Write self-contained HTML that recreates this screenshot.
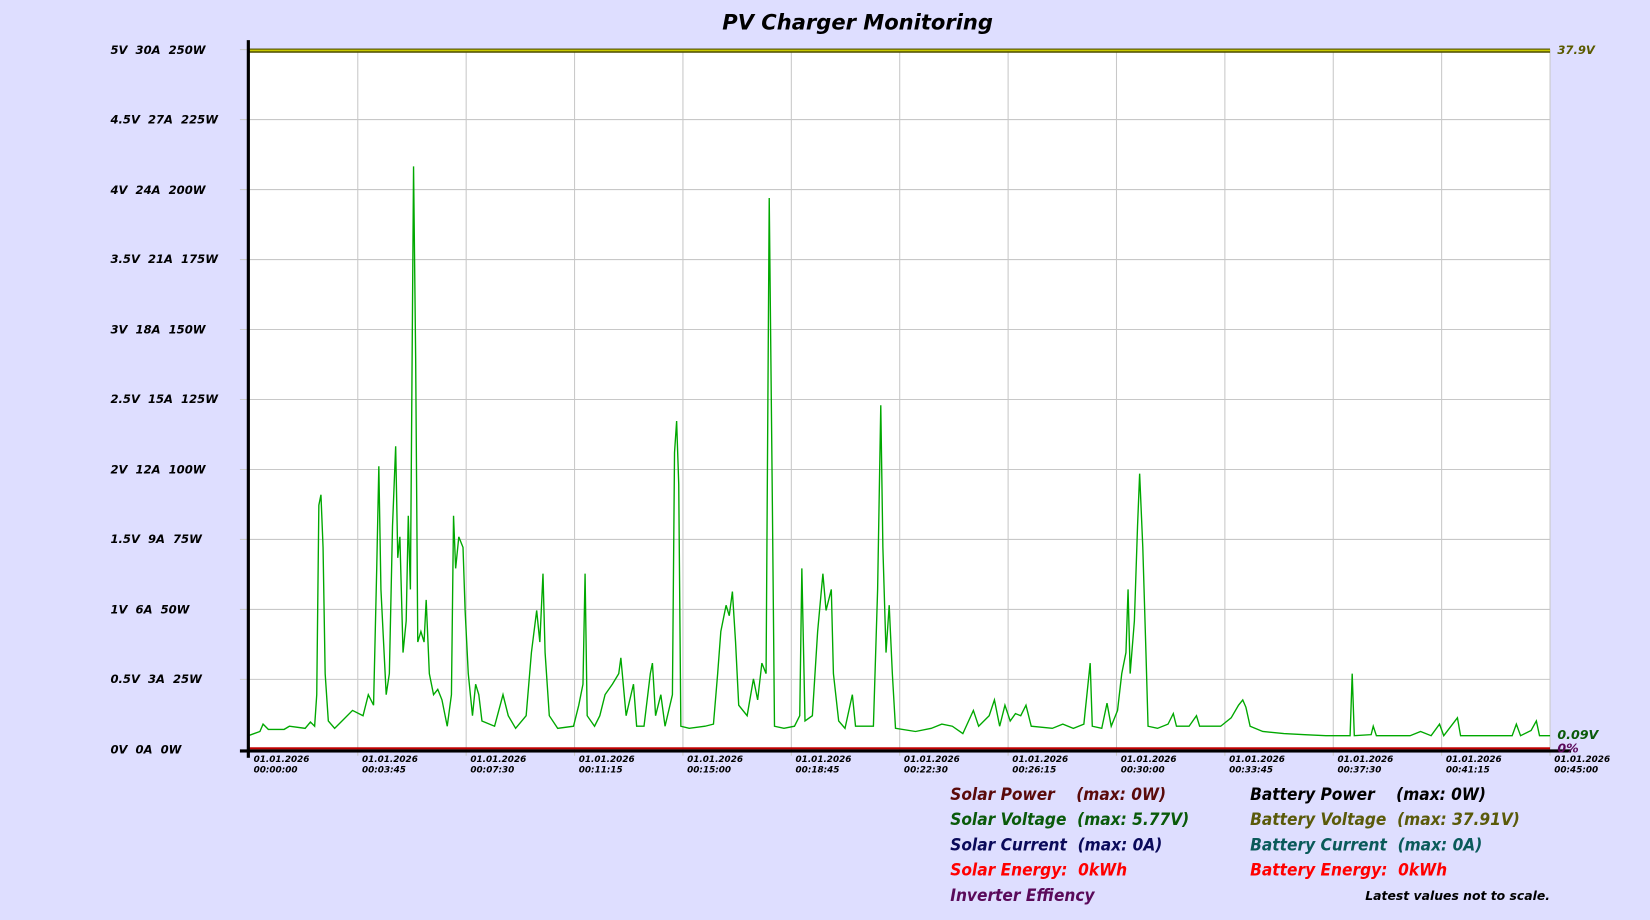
<!DOCTYPE html>
<html><head><meta charset="utf-8"><style>
html,body{margin:0;padding:0;background:#dedeff;width:1650px;height:920px;overflow:hidden}
svg{display:block}
text{font-family:"DejaVu Sans","Liberation Sans",sans-serif;font-style:italic;font-weight:bold;white-space:pre}
.lg text{font-family:"DejaVu Sans Condensed","DejaVu Sans",sans-serif;font-weight:bold}
</style></head><body>
<svg width="1650" height="920" viewBox="0 0 1568 874" xmlns="http://www.w3.org/2000/svg" xml:space="preserve">
<rect width="1568" height="874" fill="#dedeff"/>
<text x="815" y="28" font-size="20" text-anchor="middle" fill="#000">PV Charger Monitoring</text>
<rect x="236" y="47" width="1237" height="665" fill="#fff"/>
<g stroke="#c8c8c8" stroke-width="1">
<line x1="228" y1="113.5" x2="1473" y2="113.5"/><line x1="228" y1="180" x2="1473" y2="180"/>
<line x1="228" y1="246.5" x2="1473" y2="246.5"/><line x1="228" y1="313" x2="1473" y2="313"/>
<line x1="228" y1="379.5" x2="1473" y2="379.5"/><line x1="228" y1="446" x2="1473" y2="446"/>
<line x1="228" y1="512.5" x2="1473" y2="512.5"/><line x1="228" y1="579" x2="1473" y2="579"/>
<line x1="228" y1="645.5" x2="1473" y2="645.5"/><line x1="228" y1="47" x2="236" y2="47"/>
<line x1="340" y1="47" x2="340" y2="718"/><line x1="443" y1="47" x2="443" y2="718"/>
<line x1="546" y1="47" x2="546" y2="718"/><line x1="649" y1="47" x2="649" y2="718"/>
<line x1="752" y1="47" x2="752" y2="718"/><line x1="855" y1="47" x2="855" y2="718"/>
<line x1="958" y1="47" x2="958" y2="718"/><line x1="1061" y1="47" x2="1061" y2="718"/>
<line x1="1164" y1="47" x2="1164" y2="718"/><line x1="1267" y1="47" x2="1267" y2="718"/>
<line x1="1370" y1="47" x2="1370" y2="718"/><line x1="1473" y1="47" x2="1473" y2="718"/>
</g>
<rect x="236" y="46" width="1237" height="4" fill="#4a4a00"/>
<rect x="236" y="47" width="1237" height="1.6" fill="#c8c800"/>
<polyline fill="none" stroke="#00a800" stroke-width="1.3" points="236,699 247,695 250,688 255,693 270,693 275,690 290,692 295,686 299,690 301,660 303,480 305,470 307,520 309,640 312,685 318,692 325,685 335,675 345,680 350,660 355,670 358,540 360,443 362,560 365,620 367,660 370,640 373,500 376,424 378,530 380,510 383,620 386,590 388,490 390,560 393,158 395,340 397,610 400,600 403,610 405,570 408,640 412,660 416,655 420,665 425,690 429,660 431,490 433,540 436,510 440,520 442,580 445,640 449,680 452,650 455,660 458,685 470,690 478,660 483,680 490,692 500,680 505,620 510,580 513,610 516,545 518,620 522,680 530,692 545,690 550,670 554,650 556,545 558,680 565,690 570,680 575,660 582,650 588,640 590,625 595,680 602,650 605,690 612,690 618,640 620,630 623,680 628,660 632,690 639,660 641,430 643,400 645,460 647,690 655,692 670,690 678,688 682,640 685,600 690,575 693,585 696,562 699,610 702,670 710,680 716,645 720,665 724,630 728,640 731,188 734,480 736,690 745,692 755,690 760,680 762,540 765,685 772,680 777,600 782,545 785,580 790,560 792,640 797,685 803,692 810,660 813,690 830,690 834,560 837,385 839,520 842,620 845,575 848,640 851,692 870,695 885,692 895,688 905,690 915,697 925,675 930,690 940,680 945,665 950,690 955,670 960,685 965,678 970,680 975,670 980,690 1000,692 1010,688 1020,692 1030,688 1036,630 1038,690 1047,692 1052,668 1056,690 1062,675 1066,640 1070,620 1072,560 1074,640 1078,590 1081,500 1083,450 1086,520 1089,620 1091,690 1100,692 1110,688 1115,678 1118,690 1130,690 1137,680 1140,690 1160,690 1170,682 1177,670 1181,665 1184,672 1188,690 1200,695 1220,697 1240,698 1260,699 1283,699 1285,640 1287,699 1303,698 1305,690 1308,699 1340,699 1350,695 1360,699 1368,688 1372,699 1385,682 1388,699 1437,699 1441,688 1445,699 1455,694 1460,685 1463,699 1473,699"/>
<rect x="236" y="710" width="1237" height="2" fill="#c00000"/>
<rect x="228" y="712" width="1265" height="3" fill="#000"/>
<rect x="234.5" y="38" width="3" height="682" fill="#000"/>
<g font-size="11" fill="#000">
<text x="105" y="51">5V  30A  250W</text><text x="105" y="117">4.5V  27A  225W</text>
<text x="105" y="184">4V  24A  200W</text><text x="105" y="250">3.5V  21A  175W</text>
<text x="105" y="317">3V  18A  150W</text><text x="105" y="383">2.5V  15A  125W</text>
<text x="105" y="450">2V  12A  100W</text><text x="105" y="516">1.5V  9A  75W</text>
<text x="105" y="583">1V  6A  50W</text><text x="105" y="649">0.5V  3A  25W</text>
<text x="105" y="716">0V  0A  0W</text>
</g>
<g font-size="8.4" fill="#000">
<text x="241" y="724">01.01.2026</text><text x="241" y="734">00:00:00</text>
<text x="344" y="724">01.01.2026</text><text x="344" y="734">00:03:45</text>
<text x="447" y="724">01.01.2026</text><text x="447" y="734">00:07:30</text>
<text x="550" y="724">01.01.2026</text><text x="550" y="734">00:11:15</text>
<text x="653" y="724">01.01.2026</text><text x="653" y="734">00:15:00</text>
<text x="756" y="724">01.01.2026</text><text x="756" y="734">00:18:45</text>
<text x="859" y="724">01.01.2026</text><text x="859" y="734">00:22:30</text>
<text x="962" y="724">01.01.2026</text><text x="962" y="734">00:26:15</text>
<text x="1065" y="724">01.01.2026</text><text x="1065" y="734">00:30:00</text>
<text x="1168" y="724">01.01.2026</text><text x="1168" y="734">00:33:45</text>
<text x="1271" y="724">01.01.2026</text><text x="1271" y="734">00:37:30</text>
<text x="1374" y="724">01.01.2026</text><text x="1374" y="734">00:41:15</text>
<text x="1477" y="724">01.01.2026</text><text x="1477" y="734">00:45:00</text>
</g>
<text x="1480" y="51" font-size="11" fill="#5a5a00">37.9V</text>
<text x="1480" y="702" font-size="12" fill="#0a5a0a">0.09V</text>
<text x="1480" y="715" font-size="12" fill="#5a0a5a">0%</text>
<g class="lg" font-size="16.3">
<text x="903" y="760" fill="#5a0a0a">Solar Power    (max: 0W)</text>
<text x="903" y="784" fill="#0a5a0a">Solar Voltage  (max: 5.77V)</text>
<text x="903" y="808" fill="#0a0a5a">Solar Current  (max: 0A)</text>
<text x="903" y="832" fill="#ff0000">Solar Energy:  0kWh</text>
<text x="903" y="856" fill="#5a0a5a">Inverter Effiency</text>
<text x="1188" y="760" fill="#000">Battery Power    (max: 0W)</text>
<text x="1188" y="784" fill="#5a5a0a">Battery Voltage  (max: 37.91V)</text>
<text x="1188" y="808" fill="#0a5a5a">Battery Current  (max: 0A)</text>
<text x="1188" y="832" fill="#ff0000">Battery Energy:  0kWh</text>
</g>
<text x="1473" y="855" font-size="11.8" fill="#000" text-anchor="end">Latest values not to scale.</text>
</svg>
</body></html>
